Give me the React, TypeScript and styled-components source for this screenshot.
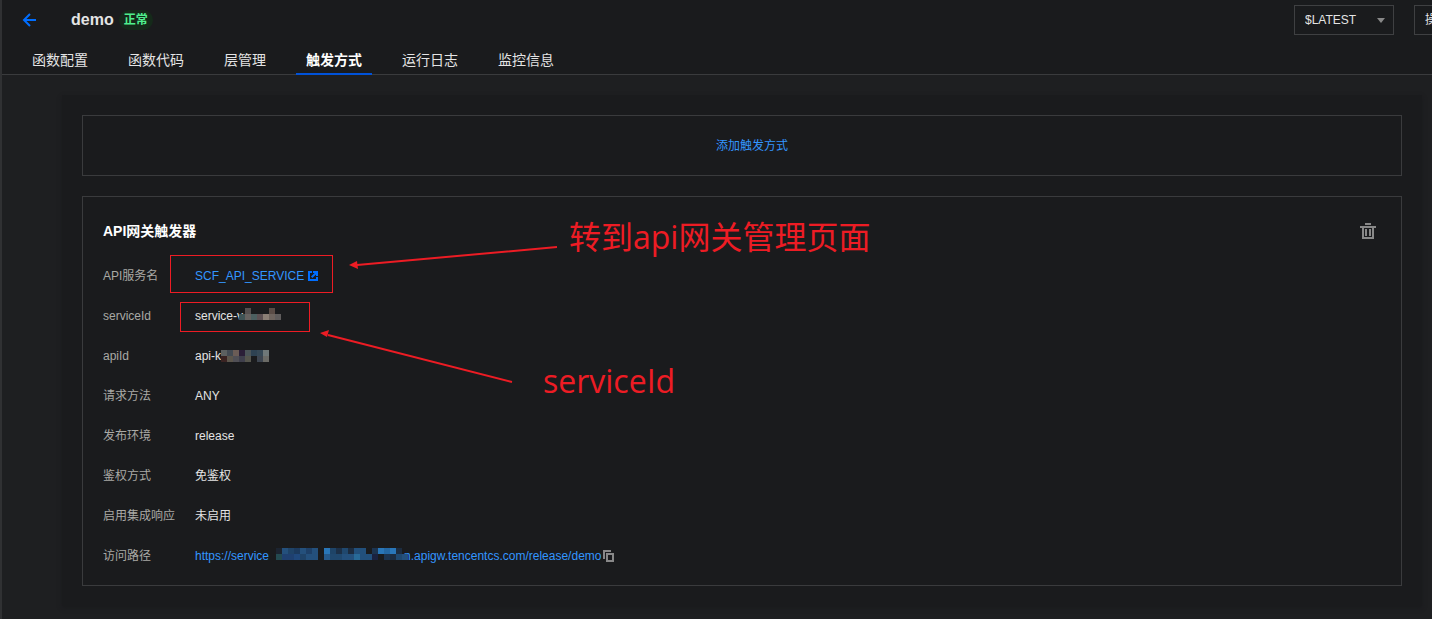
import React from 'react';
import styled, { createGlobalStyle } from 'styled-components';

const sans = `"Liberation Sans", "Noto Sans CJK SC", sans-serif`;
const red = '#ed1c24';

const GlobalStyle = createGlobalStyle`
  * { box-sizing: border-box; }
  body { margin: 0; background: #1e1f21; color: #e4e4e4; font: 12px/20px ${sans}; overflow-x: hidden; }
  button, select { font: inherit; color: inherit; }
`;

const Page = styled.div`
  min-height: 100vh;
  border-left: 2px solid #303133;
  overflow: hidden;
`;

const Header = styled.header`
  background: #1a1b1d;
  border-bottom: 1px solid #3a3b3d;
`;

const TitleBar = styled.div`
  display: flex;
  align-items: center;
  height: 40px;
  padding-left: 20px;
`;

const BackButton = styled.button`
  display: flex;
  width: 16px;
  height: 16px;
  margin-right: 33px;
  padding: 0;
  border: 0;
  background: none;
  cursor: pointer;
`;

const Title = styled.h1`
  margin: 0 5px 0 0;
  font-size: 16px;
  line-height: 20px;
`;

const Status = styled.span`
  padding: 0 5px;
  border-radius: 10px;
  background: #152a1a;
  color: #4ff08e;
  font-weight: 700;
`;

const Actions = styled.div`
  display: flex;
  flex: none;
  gap: 20px;
  margin-left: auto;
  margin-right: -56px;
`;

const SelectBox = styled.div`
  display: grid;
  align-items: center;
  width: 100px;

  > * { grid-area: 1 / 1; }
  > svg { justify-self: end; margin-right: 9px; pointer-events: none; }
`;

const VersionSelect = styled.select`
  appearance: none;
  width: 100%;
  height: 30px;
  padding: 0 10px;
  border: 1px solid #3f4042;
  border-radius: 0;
  background: #1a1b1d;
`;

const MenuButton = styled.button`
  width: 74px;
  height: 30px;
  padding: 0 10px;
  border: 1px solid #3f4042;
  background: #1a1b1d;
  text-align: left;
`;

const Tabs = styled.nav`
  display: flex;
  gap: 20px;
  padding-left: 20px;
`;

const Tab = styled.a<{ $active?: boolean }>`
  padding: 0 10px;
  margin-bottom: ${p => (p.$active ? '-1px' : '0')};
  height: ${p => (p.$active ? '35px' : '34px')};
  border-bottom: ${p => (p.$active ? '2px solid #0052d9' : '0')};
  color: ${p => (p.$active ? '#ffffff' : '#e4e4e4')};
  font-size: 14px;
  font-weight: ${p => (p.$active ? 700 : 400)};
  line-height: 40px;
  text-decoration: none;
`;

const Main = styled.main`
  margin: 20px 10px 10px 60px;
  padding: 20px;
  background: #1a1b1d;
  box-shadow: 0 2px 4px #1a1b1d;
`;

const AddBox = styled.div`
  display: flex;
  align-items: center;
  justify-content: center;
  height: 61px;
  padding-left: 20px;
  margin-bottom: 20px;
  border: 1px solid #3a3b3d;
`;

const AddButton = styled.button`
  padding: 0;
  border: 0;
  background: none;
  color: #3396ff;
  cursor: pointer;
`;

const Card = styled.section`
  position: relative;
  padding: 9px 20px;
  border: 1px solid #3a3b3d;
`;

const CardHead = styled.div`
  display: flex;
  align-items: center;
  justify-content: space-between;
  height: 50px;
`;

const CardTitle = styled.h2`
  margin: 0;
  color: #ffffff;
  font-size: 14px;
  line-height: 20px;
`;

const IconButton = styled.button`
  display: flex;
  padding: 0;
  border: 0;
  background: none;
  cursor: pointer;
`;

const TrashButton = styled(IconButton)`
  margin-right: 5px;
`;

const Fields = styled.dl`
  margin: 0;
`;

const Field = styled.div`
  display: flex;
  align-items: center;
  height: 40px;
`;

const Label = styled.dt`
  width: 92px;
  color: #a9a9a5;
`;

const Value = styled.dd`
  display: flex;
  align-items: center;
  margin: 0;
`;

const Link = styled.a`
  display: flex;
  align-items: center;
  color: #3396ff;
  text-decoration: none;
`;

const ExternalIcon = styled.svg`
  margin-left: 4px;
`;

const MarkBox = styled.div<{ $x: number; $y: number; $w: number; $h: number }>`
  position: absolute;
  left: ${p => p.$x}px;
  top: ${p => p.$y}px;
  width: ${p => p.$w}px;
  height: ${p => p.$h}px;
  border: 1px solid ${red};
  pointer-events: none;
`;

const MarkText = styled.span<{ $x: number; $y: number }>`
  position: absolute;
  left: ${p => p.$x}px;
  top: ${p => p.$y}px;
  color: ${red};
  font-family: "Open Sans", "Noto Sans CJK SC", sans-serif;
  font-size: 32px;
  line-height: 40px;
  white-space: nowrap;
`;

const Arrows = styled.svg`
  position: absolute;
  left: 0;
  top: 0;
  pointer-events: none;
`;

/* The blocks may cover a few pixels of the letters on either side. */
const MosaicSvg = styled.svg<{ $left: number; $right: number; $bottom: number }>`
  position: relative;
  z-index: 1;
  margin: 0 ${p => p.$right}px ${p => p.$bottom}px ${p => p.$left}px;
`;

type MosaicProps = { rows: (string | null)[][]; left?: number; right?: number; bottom?: number };

/* Blocks that hide the private part of an identifier; null leaves a cell clear. */
const Mosaic = ({ rows, left = 0, right = 0, bottom = 0 }: MosaicProps) => (
  <MosaicSvg
    width={rows[0].length * 6}
    height={rows.length * 6}
    shapeRendering="crispEdges"
    aria-hidden="true"
    $left={left}
    $right={right}
    $bottom={bottom}
  >
    {rows.map((row, y) =>
      row.map((c, x) => c && <rect key={`${x}-${y}`} x={x * 6} y={y * 6} width="6" height="6" fill={c} />)
    )}
  </MosaicSvg>
);

const serviceMosaic = [
  [null, '#555050', null, null, null, '#5a4c46', null],
  ['#3f5355', '#666260', '#4c5f60', '#5c5053', '#8a7e75', '#6e645e', '#5f5c5c'],
];
const apiMosaic = [
  ['#5c6060', '#434a52', '#6b5c56', '#2b1f38', '#4b5458', '#2e4252', '#364855', '#6f7878'],
  ['#3a2322', '#5c564c', '#504f55', '#3f3f4c', '#55554d', null, '#3d4550', '#6b6b66'],
];
const urlMosaic = [
  ['#1c2430', '#24507c', '#1f4368', '#1c3a5e', '#24507c', '#1e4068', '#24507c', null, '#2976b8', '#1e4468', '#1c3048', '#20486e', '#1c2c40', '#22507c', '#22507c', null, '#1c3450', '#2976b8', '#2468a4', '#2976b8', '#1c2c40', null],
  ['#244a50', '#1f4070', '#1f4070', '#20487c', '#1f4368', '#24507c', '#24507c', null, '#265a8c', '#20486e', '#20486e', '#24507c', '#24507c', '#286a98', '#22507c', '#22507c', '#1a2240', null, '#1c3450', '#1c2c40', '#20486e', '#24507c'],
];

const tabs = ['函数配置', '函数代码', '层管理', '触发方式', '运行日志', '监控信息'];

export default function App() {
  return (
    <>
      <GlobalStyle />
      <Page>
        <Header>
          <TitleBar>
            <BackButton aria-label="返回">
              <svg width="16" height="16" viewBox="0 0 16 16" fill="none" stroke="#006eff" strokeWidth="2">
                <path d="M8 2 2 8l6 6M2 8h12" />
              </svg>
            </BackButton>
            <Title>demo</Title>
            <Status>正常</Status>
            <Actions>
              <SelectBox>
                <VersionSelect aria-label="版本" defaultValue="$LATEST">
                  <option>$LATEST</option>
                </VersionSelect>
                <svg width="8" height="5" viewBox="0 0 8 5"><path d="M0 0h8L4 5z" fill="#888888" /></svg>
              </SelectBox>
              <MenuButton>操作</MenuButton>
            </Actions>
          </TitleBar>
          <Tabs>
            {tabs.map(t => (
              <Tab key={t} href="#" $active={t === '触发方式'}>{t}</Tab>
            ))}
          </Tabs>
        </Header>
        <Main>
          <AddBox><AddButton>添加触发方式</AddButton></AddBox>
          <Card>
            <CardHead>
              <CardTitle>API网关触发器</CardTitle>
              <TrashButton aria-label="删除">
                <svg width="16" height="16" viewBox="0 0 16 16" fill="#888888" shapeRendering="crispEdges">
                  <path d="M5 0h6v2H5zM0 3h16v2h-2v11H2V5H0zM4 5v9h8V5z" fillRule="evenodd" />
                  <path d="M5 6h2v7H5zM9 6h2v7H9z" />
                </svg>
              </TrashButton>
            </CardHead>
            <Fields>
              <Field>
                <Label>API服务名</Label>
                <Value>
                  <Link href="#">
                    SCF_API_SERVICE
                    <ExternalIcon width="10" height="10" viewBox="0 0 10 10" aria-hidden="true">
                      <path d="M0 0h4v2H2v6h6V6h2v4H0zM5 0h5v5H8V3.400L4.400 7 3 5.600 6.600 2H5z" fill="#006eff" />
                    </ExternalIcon>
                  </Link>
                </Value>
              </Field>
              <Field>
                <Label>serviceId</Label>
                <Value>service-v<Mosaic rows={serviceMosaic} left={-4} bottom={4} /></Value>
              </Field>
              <Field>
                <Label>apiId</Label>
                <Value>api-k<Mosaic rows={apiMosaic} /></Value>
              </Field>
              <Field><Label>请求方法</Label><Value>ANY</Value></Field>
              <Field><Label>发布环境</Label><Value>release</Value></Field>
              <Field><Label>鉴权方式</Label><Value>免鉴权</Value></Field>
              <Field><Label>启用集成响应</Label><Value>未启用</Value></Field>
              <Field>
                <Label>访问路径</Label>
                <Value>
                  <Link href="#">
                    https://service
                    <Mosaic rows={urlMosaic} left={7} right={-4} bottom={4} />
                    n.apigw.tencentcs.com/release/demo
                  </Link>
                  <IconButton aria-label="复制">
                    <svg width="14" height="12" viewBox="0 0 14 12" fill="#888888" shapeRendering="crispEdges">
                      <path d="M2 0h8v2H4v7H2zM5 3h8v9H5zM7 5v5h4V5z" fillRule="evenodd" />
                    </svg>
                  </IconButton>
                </Value>
              </Field>
            </Fields>
            <MarkBox $x={87} $y={58} $w={163} $h={38} />
            <MarkBox $x={97} $y={105} $w={130} $h={30} />
            <Arrows width="480" height="200" viewBox="0 0 480 200" fill={red} stroke={red}>
              <path d="M474 50 274 68M429 185 245 138" strokeWidth="2" fill="none" />
              <path d="M266 68l8-4 1 8zM237 136l9-3-2 7z" strokeWidth="0" />
            </Arrows>
            <MarkText $x={486} $y={20}>转到api网关管理页面</MarkText>
            <MarkText $x={460} $y={164}>serviceId</MarkText>
          </Card>
        </Main>
      </Page>
    </>
  );
}
